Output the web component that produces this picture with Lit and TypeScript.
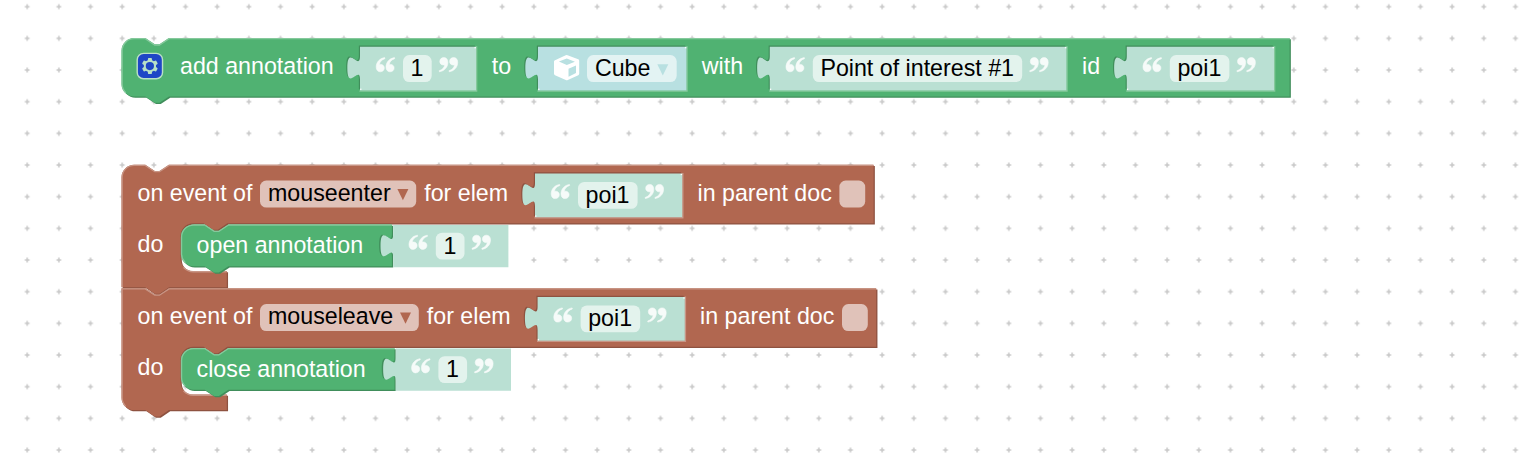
import { LitElement, html, svg, css } from "lit";
import { customElement } from "lit/decorators.js";

// Workspace zoom: block geometry is defined in block units and multiplied by S.
const S = 31.665 / 20;
const R = 8 * S;
const NOTCH_X = 15 * S;
const NOTCH_R = `l ${6 * S},${4 * S} ${3 * S},0 ${6 * S},${-4 * S}`;
const NOTCH_L = `l ${-6 * S},${4 * S} ${-3 * S},0 ${-6 * S},${-4 * S}`;
const TAB_BOTTOM = 20.95 * S;
const TAB_UP = `c 0,${-10 * S} ${-8 * S},${8 * S} ${-8 * S},${-7.5 * S} s ${8 * S},${2.5 * S} ${8 * S},${-7.5 * S}`;
const EDGE = 1.25;
const MINT = "#bae0d3";
const CYAN = "#b8e0e1";

interface Look { fill: string; light: string; dark: string; }
const GREEN: Look = { fill: "#50b272", light: "#85c99c", dark: "#408e5b" };
const BROWN: Look = { fill: "#b16750", light: "#c89585", dark: "#8e5240" };

const QUOTE_MARK =
  "M8.9,.5C3.9,1.3 .4,5 .4,10C.4,13 2.1,14.7 4.5,14.7C6.8,14.7 8.5,13.1 8.5,10.9C8.5,8.7 6.9,7.3 5,7.3C4.4,7.3 4,7.4 3.6,7.6C3.9,4.8 6,2.5 9.1,1.6Z";

const quote = (x: number, y: number, closing = false) => svg`
  <g class="mark" transform=${closing ? `translate(${x + 19},${y + 15}) rotate(180)` : `translate(${x},${y})`}>
    <path d=${QUOTE_MARK}></path><path d=${QUOTE_MARK} transform="translate(9.8,0)"></path>
  </g>`;

const pill = (x: number, y: number, w: number) =>
  svg`<rect class="pill" x=${x} y=${y} width=${w} height="26.9" rx="6.3"></rect>`;
const label = (x: number, y: number, t: string) => svg`<text class="label" x=${x} y=${y}>${t}</text>`;
const value = (x: number, y: number, t: string) => svg`<text class="value" x=${x} y=${y}>${t}</text>`;
const arrow = (x: number, y: number, color: string) =>
  svg`<path d="M${x},${y}h11l-5.5,11.4z" fill=${color}></path>`;

const valueShape = (x: number, y: number, w: number, h: number) =>
  `M${x},${y}H${x + w}V${y + h}H${x}V${y + TAB_BOTTOM}${TAB_UP}Z`;

// A value block plugged into an inline socket: shaded top/left, lit right/bottom.
const socket = (x: number, y: number, w: number, fill: string, look: Look) => {
  const h = 43.7;
  return svg`
    <path d=${valueShape(x, y, w, h)} fill=${look.dark} transform="translate(-1.15,-1.15)"></path>
    <path d="M${x + w + 0.6},${y - 0.4}V${y + h + 0.7}H${x - 0.6}" fill="none" stroke=${look.light} stroke-width="1.4"></path>
    <path d=${valueShape(x, y, w, h)} fill=${fill}></path>
    <rect x=${x + w - 1.5} y=${y + 0.4} width="1.4" height="1.2" fill="#fff"></rect>
    <rect x=${x + 0.2} y=${y + h - 1.8} width="1.2" height="1.4" fill="#fff"></rect>`;
};

const stringFields = (x: number, y: number, pillW: number, t: string) => svg`
  ${quote(x + 15.8, y + 10.4)}
  ${pill(x + 43, y + 8.4, pillW)}
  ${value(x + 50.6, y + 29.4, t)}
  ${quote(x + 43 + pillW + 7.4, y + 10.6, true)}`;

const blockBody = (d: string, light: string, look: Look) => svg`
  <path d=${d} fill=${look.dark} transform="translate(${EDGE},${EDGE})"></path>
  <path d=${d} fill=${look.fill}></path>
  <path d=${light} fill="none" stroke=${look.light} stroke-width="1.3" stroke-linecap="round"></path>`;

const statement = (x: number, y: number, w: number, h: number) => {
  const d = `M${x},${y + R}a${R},${R} 0 0 1 ${R},${-R}H${x + NOTCH_X}${NOTCH_R}H${x + w}V${y + h}H${x + 30 * S}${NOTCH_L}H${x + R}a${R},${R} 0 0 1 ${-R},${-R}Z`;
  const i = 0.65;
  const r = R - i;
  const light = `M${x + 0.29 * R + i / 2},${y + h - 0.29 * R - i / 2}A${r},${r} 0 0 1 ${x + i},${y + h - R}V${y + R}a${r},${r} 0 0 1 ${r},${-r}H${x + NOTCH_X}${NOTCH_R}H${x + w - i}`;
  return blockBody(d, light, GREEN);
};

const eventBody = (x: number, y: number, w: number, top: boolean, h: number) => {
  const ix = x + 59;
  const rowY = y + 58.6;
  const footY = y + 106.4;
  const footX = x + 105.3;
  const head = top ? `M${x},${y + R}a${R},${R} 0 0 1 ${R},${-R}` : `M${x},${y}`;
  const tail = top ? `H${x}Z` : `H${x + R}a${R},${R} 0 0 1 ${-R},${-R}Z`;
  const d =
    `${head}H${x + NOTCH_X}${NOTCH_R}H${x + w}V${rowY}H${ix + 30 * S - 0.6}${NOTCH_L}H${ix + R}` +
    `a${R},${R} 0 0 0 ${-R},${R}V${footY - R}a${R},${R} 0 0 0 ${R},${R}H${footX}V${y + h}H${x + 30 * S}${NOTCH_L}${tail}`;
  const i = 0.65;
  const r = R - i;
  const leftEdge = top
    ? `M${x + i},${y + h - i}V${y + R}a${r},${r} 0 0 1 ${r},${-r}`
    : `M${x + 0.29 * R + i / 2},${y + h - 0.29 * R - i / 2}A${r},${r} 0 0 1 ${x + i},${y + h - R}V${y + i}`;
  const light =
    `${leftEdge}H${x + NOTCH_X}${NOTCH_R}H${x + w - i}` +
    `M${ix + 0.29 * R - i / 2},${footY - 0.29 * R + i / 2}A${R + i},${R + i} 0 0 0 ${ix + R},${footY + i}H${footX - i}`;
  return blockBody(d, light, BROWN);
};

const externalValue = (x: number, y: number) => svg`
  <path d="M${x - 0.6},${y + TAB_BOTTOM - 0.4}${TAB_UP}" transform="translate(-.8,-.7)" fill=${GREEN.dark}></path>
  <path d="M${x},${y}h115.2v42.4h-115.2V${y + TAB_BOTTOM - 0.4}${TAB_UP}Z" fill=${MINT}></path>
  ${stringFields(x - 0.4, y - 0.6, 28.7, "1")}`;

const GEAR =
  "m4.203,7.296 0,1.368 -0.92,0.677 -0.11,0.41 0.9,1.559 0.41,0.11 1.043,-0.457 1.187,0.683 0.127,1.134 0.3,0.3 1.8,0 0.3,-0.299 0.127,-1.138 1.185,-0.682 1.046,0.458 0.409,-0.11 0.9,-1.559 -0.11,-0.41 -0.92,-0.677 0,-1.366 0.92,-0.677 0.11,-0.41 -0.9,-1.559 -0.409,-0.109 -1.046,0.458 -1.185,-0.682 -0.127,-1.138 -0.3,-0.299 -1.8,0 -0.3,0.3 -0.126,1.135 -1.187,0.682 -1.043,-0.457 -0.41,0.11 -0.899,1.559 0.108,0.409z";

const annotationBlock = () => svg`
  <g>
    ${statement(121.5, 38, 1168.1, 58.5)}
    <g transform="translate(137.2,53.4) scale(${S})" opacity=".6">
      <rect width="16" height="16" rx="4" fill="#00f" stroke="#fff" stroke-width=".9"></rect>
      <path d=${GEAR} fill="#fff"></path>
      <circle cx="8" cy="8" r="2.6" fill="#00f"></circle>
    </g>
    ${label(180, 74, "add annotation")}
    ${socket(360, 46.7, 116, MINT, GREEN)}
    ${stringFields(360, 46.7, 28.7, "1")}
    ${label(491.8, 74, "to")}
    ${socket(538, 46.7, 148.4, CYAN, GREEN)}
    <path fill="#fff" fill-rule="evenodd" d="M554,61.6Q554,60.6 555,60.2L565.7,55.3Q566.6,54.9 567.5,55.2L578.2,59.3Q579.2,59.7 579.2,60.7V73.8Q579.2,74.7 578.3,75.2L567.8,80.1Q566.8,80.6 565.8,80.1L555,75.2Q554,74.7 554,73.8Z M558.9,61.6L566.8,65L574.9,61.7L566.8,58.4Z M568.5,68.7V76.7L576,73.1V65.5Z"></path>
    ${pill(587, 55.1, 89.7)}
    ${value(594.9, 76.1, "Cube")}
    ${arrow(657.3, 64.2, "#b8e0e1")}
    ${label(701.8, 74, "with")}
    ${socket(769.8, 46.7, 296.6, MINT, GREEN)}
    ${stringFields(769.8, 46.7, 209.4, "Point of interest #1")}
    ${label(1082, 74, "id")}
    ${socket(1126.8, 46.7, 147.2, MINT, GREEN)}
    ${stringFields(1126.8, 46.7, 59.6, "poi1")}
  </g>`;

const eventBlock = (y: number, first: boolean, name: string, action: string, dx: number) => svg`
  <g>
    ${eventBody(121.5, y - 0.3, 752.1 + dx, first, first ? 122.6 : 121.9)}
    ${label(137.5, y + 35.8, "on event of")}
    ${pill(260, y + 15.6, 156.2 + dx)}
    ${value(268, y + 35.8, name)}
    ${arrow(397.4 + dx, y + 23.9, BROWN.fill)}
    ${label(424.2 + dx, y + 35.8, "for elem")}
    ${socket(535 + dx, y + 8.5, 147.2, MINT, BROWN)}
    ${stringFields(535 + dx, y + 8.5, 59.6, "poi1")}
    ${label(697.5 + dx, y + 35.8, "in parent doc")}
    ${pill(839.4 + dx, y + 15.6, 25.8)}
    ${label(137.5, y + 86.8, "do")}
    ${statement(180.9, y + 59.4, 211 + dx, 41.8)}
    ${label(196.6, y + 88, action)}
    ${externalValue(393.2 + dx, y + 59.9)}
  </g>`;

@customElement("app-root")
export class AppRoot extends LitElement {
  static styles = css`
    :host { display: block; height: 468px; overflow: hidden; background: #fff; }
    .workspace { display: block; width: 100%; height: 100%; }
    text { font-family: "Liberation Sans", Arial, sans-serif; font-size: 23.22px; white-space: pre; }
    .label { fill: #fff; }
    .value { fill: #000; }
    .pill { fill: #fff; fill-opacity: .6; }
    .mark { fill: #fff; stroke: #fff; stroke-width: .6; opacity: .88; }
  `;

  render() {
    return html`
      <svg class="workspace" role="img" aria-label="Block workspace">
        <defs>
          <pattern id="grid" width="31.665" height="31.665" patternUnits="userSpaceOnUse" x="11.37" y="-9.13">
            <path d="M13.45,15.83h4.76M15.83,13.45v4.76" stroke="#c8c8c8" stroke-width="1.5"></path>
          </pattern>
        </defs>
        <rect width="100%" height="100%" fill="url(#grid)"></rect>
        ${annotationBlock()}
        ${eventBlock(165, true, "mouseenter", "open annotation", 0)}
        ${eventBlock(288.5, false, "mouseleave", "close annotation", 2.6)}
      </svg>`;
  }
}
